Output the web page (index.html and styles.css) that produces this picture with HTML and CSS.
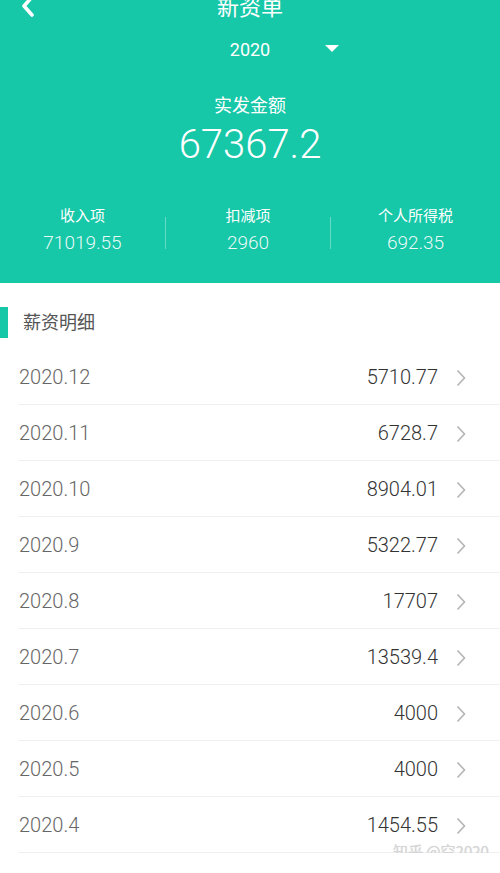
FILE: index.html
```html
<!DOCTYPE html>
<html lang="zh-CN">
<head>
  <meta charset="UTF-8" />
  <meta name="viewport" content="width=device-width, initial-scale=1.0"/>
  <title>薪资单</title>
  <link rel="stylesheet" href="styles.css">
</head>
<body>
  <header class="summary">
    <div class="nav">
      <svg class="back" width="16" height="20" viewBox="0 0 16 20">
        <path d="M12 -1 L4 8 L12 17" fill="none" stroke="#fff" stroke-width="3.6" stroke-linecap="round" stroke-linejoin="round"/>
      </svg>
      <h1 class="title">新资单</h1>
      <span></span>
    </div>

    <div class="year">
      <span></span>
      <span class="year-value">2020</span>
      <svg class="caret" width="14" height="8" viewBox="0 0 14 8">
        <path d="M0 0 H14 L7 7 Z" fill="#fff"/>
      </svg>
    </div>

    <p class="total-label">实发金额</p>
    <p class="total-value">67367.2</p>

    <div class="stats">
      <div class="stat">
        <span class="stat-label">收入项</span>
        <span class="stat-value">71019.55</span>
      </div>
      <div class="divider"></div>
      <div class="stat">
        <span class="stat-label">扣减项</span>
        <span class="stat-value">2960</span>
      </div>
      <div class="divider"></div>
      <div class="stat">
        <span class="stat-label">个人所得税</span>
        <span class="stat-value">692.35</span>
      </div>
    </div>
  </header>

  <section class="details">
    <h2 class="section-title">薪资明细</h2>
    <ul class="months" id="months"></ul>
  </section>

  <div class="watermark">知乎 @空2020</div>

  <script>
    const months = [
      ["2020.12", "5710.77"],
      ["2020.11", "6728.7"],
      ["2020.10", "8904.01"],
      ["2020.9", "5322.77"],
      ["2020.8", "17707"],
      ["2020.7", "13539.4"],
      ["2020.6", "4000"],
      ["2020.5", "4000"],
      ["2020.4", "1454.55"]
    ];

    const list = document.getElementById("months");
    months.forEach(([month, amount]) => {
      const li = document.createElement("li");
      li.className = "month-row";
      li.innerHTML = `
        <span class="month">${month}</span>
        <span class="amount">${amount}</span>
        <svg class="chevron" width="10" height="18" viewBox="0 0 10 18">
          <path d="M1.5 1.5 L8.5 9 L1.5 16.5" fill="none" stroke="#b4b4b4" stroke-width="1.6"/>
        </svg>`;
      list.appendChild(li);
    });
  </script>
</body>
</html>
```

FILE: styles.css
```css
* {
  box-sizing: border-box;
}

body {
  margin: 0;
  font-family: Roboto, "Noto Sans CJK SC", sans-serif;
  background: #fff;
  position: relative;
}

p, h1, h2, ul {
  margin: 0;
  padding: 0;
}

.summary {
  height: 283px;
  background: #16c7a8;
  color: #fff;
  text-align: center;
}

.nav {
  display: grid;
  grid-template-columns: 1fr auto 1fr;
  align-items: start;
  height: 16px;
}

.back {
  margin-left: 20px;
  margin-top: -2px;
}

.title {
  font-size: 22px;
  font-weight: normal;
  line-height: 16px;
}

.year {
  display: grid;
  grid-template-columns: 1fr auto 1fr;
  align-items: center;
  margin-top: 22px;
  line-height: 24px;
}

.year-value {
  font-size: 18px;
}

.caret {
  margin-left: 55px;
  margin-top: -2px;
}

.total-label {
  margin-top: 32px;
  font-size: 18px;
  line-height: 24px;
}

.total-value {
  margin-top: 4px;
  font-size: 40px;
  font-weight: 300;
  line-height: 46px;
}

.stats {
  display: grid;
  grid-template-columns: 165px 1px 164px 1px 1fr;
  align-items: center;
  margin-top: 37px;
}

.stat {
  display: flex;
  flex-direction: column;
  gap: 3px;
}

.stat-label {
  font-size: 15px;
  line-height: 22px;
}

.stat-value {
  font-size: 19px;
  font-weight: 300;
  line-height: 26px;
  color: rgba(255, 255, 255, 0.92);
}

.divider {
  height: 32px;
  margin-top: 4px;
  background: rgba(255, 255, 255, 0.35);
}

.section-title {
  margin: 24px 0 11px;
  height: 31px;
  line-height: 31px;
  border-left: 8px solid #16c7a8;
  padding-left: 15px;
  font-size: 18px;
  font-weight: normal;
  color: #555;
}

.months {
  list-style: none;
  margin-left: 18px;
}

.month-row {
  display: flex;
  align-items: center;
  height: 56px;
  padding: 0 34px 0 1px;
  border-bottom: 1px solid #f0f0f0;
}

.month {
  flex: 1;
  font-size: 20px;
  font-weight: 300;
  color: #666;
}

.amount {
  font-size: 20px;
  font-weight: 300;
  color: #333;
}

.chevron {
  margin-left: 18px;
  margin-top: 2px;
}

.watermark {
  position: absolute;
  left: 393px;
  top: 841px;
  font-family: "Noto Sans CJK SC", sans-serif;
  font-size: 15px;
  line-height: 20px;
  color: #d6d6d6;
  text-shadow: 0 0 1px rgba(0, 0, 0, 0.15);
}
```
